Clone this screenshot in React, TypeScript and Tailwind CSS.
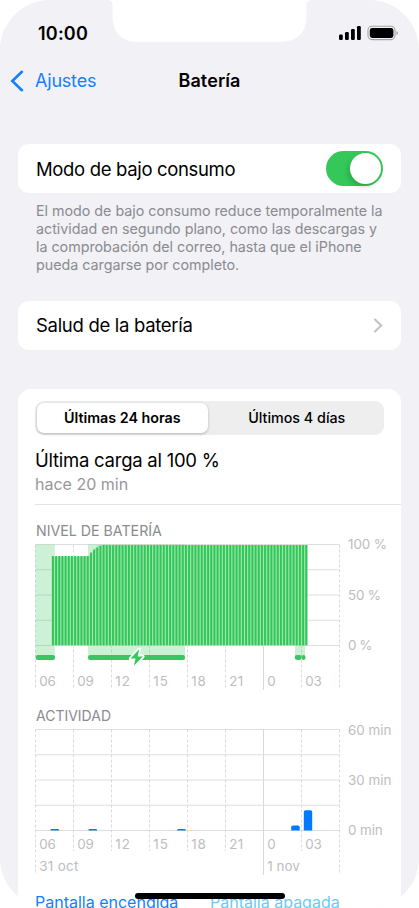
import React from "react";

const HOURS = ["06", "09", "12", "15", "18", "21", "0", "03"];
const LEFT = 35.5;
const STEP = 38;
const SLOT = STEP / 12;
const RAMP = [552.6, 549.4, 547.6, 546];

const levelBars = Array.from({ length: 81 }, (_, n) => {
  const top = n < 12 ? 556 : n < 16 ? RAMP[n - 12] : 545;
  return { x: LEFT + (n + 5) * SLOT + 0.6, top };
});

function Label({ x, y, w, children }: { x: number; y: number; w: number; children: string }) {
  return (
    <text x={x} y={y} textLength={w} lengthAdjust="spacing" fontSize="13.4" fill="#bdbdc0">
      {children}
    </text>
  );
}

function Grid({ top, bottom, tail, ends }: { top: number; bottom: number; tail: number; ends: number }) {
  return (
    <g strokeWidth="1">
      {[0, 1, 2, 3, 4].map((i) => {
        const y = top + ((bottom - top) * i) / 4;
        return <line key={i} x1={LEFT} x2={LEFT + 304} y1={y} y2={y} stroke="#dededf" />;
      })}
      {Array.from({ length: 9 }, (_, i) => (
        <line
          key={i}
          x1={LEFT + i * STEP}
          x2={LEFT + i * STEP}
          y1={top}
          y2={i === 6 ? ends + 2 : i === 0 || i === 8 ? ends : tail}
          stroke={i === 6 ? "#d9d9db" : "#dadadc"}
          strokeDasharray={i === 6 ? undefined : "3 2"}
        />
      ))}
    </g>
  );
}

function HourLabels({ y }: { y: number }) {
  return (
    <>
      {HOURS.map((h, i) => (
        <Label key={h} x={LEFT + i * STEP + 3.8} y={y} w={h === "0" ? 8 : h[0] === "1" ? 14.6 : h === "21" ? 14 : 16.5}>
          {h}
        </Label>
      ))}
    </>
  );
}

function LevelChart() {
  return (
    <svg className="block h-[162px] w-[383px] overflow-visible" viewBox="18 538 383 162" fontFamily='Inter, "Liberation Sans", sans-serif'>
      <Grid top={544.5} bottom={645.5} tail={688} ends={688} />
      <g fill="#34c759" fillOpacity="0.25">
        <rect x="35.5" y="544.5" width="19.3" height="111" />
        <rect x="88" y="544.5" width="97" height="111" />
        <rect x="295" y="645" width="10" height="11" />
      </g>
      <path d="M51.8 645.3V556.5H88.5L98 545H307.6V645.3Z" fill="#98ebac" />
      {levelBars.map((b) => (
        <rect key={b.x} x={b.x} y={b.top} width="2" height={645.3 - b.top} rx="0.4" fill="#36c45a" />
      ))}
      <g fill="#3cc463">
        <rect x="35.7" y="655" width="19.3" height="5" rx="2" />
        <rect x="88" y="655" width="97" height="5" rx="2" />
        <rect x="294.7" y="655" width="7" height="5" rx="2.4" />
        <rect x="301.7" y="655" width="3.7" height="5" rx="1.8" />
      </g>
      <path
        d="M139.2 649.3L130.6 658.6H135.5L133.9 665.8L142.8 656.4H137.7Z"
        fill="#34c759"
        stroke="#fff"
        strokeWidth="3.6"
        strokeLinejoin="round"
        paintOrder="stroke"
      />
      <HourLabels y={686} />
      <Label x={348} y={549.3} w={39}>100 %</Label>
      <Label x={348} y={599.5} w={33}>50 %</Label>
      <Label x={348} y={650} w={24.5}>0 %</Label>
    </svg>
  );
}

function ActivityChart() {
  return (
    <svg className="block h-[156px] w-[383px] overflow-visible" viewBox="18 722 383 156" fontFamily='Inter, "Liberation Sans", sans-serif'>
      <Grid top={729.5} bottom={830.5} tail={851} ends={873} />
      <g fill="#007aff">
        <path d="M50.5 830.5V829.7Q50.5 829 51.5 829H58Q59 829 59 829.7V830.5Z" />
        <path d="M88.5 830.5V829.7Q88.5 829 89.5 829H96Q97 829 97 829.7V830.5Z" />
        <path d="M177.2 830.5V829.7Q177.2 829 178.2 829H184.7Q185.7 829 185.7 829.7V830.5Z" />
        <path d="M291.2 830.5V827.3Q291.2 825.6 292.9 825.6H298Q299.7 825.6 299.7 827.3V830.5Z" />
        <path d="M303.8 830.5V812Q303.8 810.3 305.5 810.3H310.5Q312.2 810.3 312.2 812V830.5Z" />
      </g>
      <HourLabels y={849} />
      <Label x={39.3} y={871} w={39}>31 oct</Label>
      <Label x={267.3} y={871} w={32.5}>1 nov</Label>
      <Label x={348} y={734.5} w={43.5}>60 min</Label>
      <Label x={348} y={785} w={43.5}>30 min</Label>
      <Label x={348} y={835.3} w={34.7}>0 min</Label>
    </svg>
  );
}

export default function App() {
  return (
    <div className="h-[908px] w-[419px] overflow-hidden bg-white font-[Inter,'Liberation_Sans',sans-serif]">
      <main className="relative flex h-full w-full flex-col overflow-hidden rounded-[50px] bg-[#f1f1f6]">
        <svg className="absolute left-[107px] top-0 h-[42px] w-[206px]" viewBox="107 0 206 42" fill="#fff">
          <path d="M107 0C111 0 112.5 2.2 112.5 6V16C112.5 32 121 41.7 137 41.7H281C297.5 41.7 306.5 32 306.5 16V6C306.5 2.2 308 0 312 0Z" />
        </svg>
        <div className="flex h-[50px] shrink-0 items-start justify-between pl-[38px] pr-[21px] pt-[22px]">
          <span className="text-[18px] font-semibold leading-[24px] tracking-[0.2px]">10:00</span>
          <svg className="mt-[3px] h-[16px] w-[60px]" viewBox="338 25 60 16">
            <rect x="339" y="34.5" width="3.8" height="5.5" rx="1.2" />
            <rect x="345" y="32" width="3.8" height="8" rx="1.2" />
            <rect x="351" y="29" width="3.8" height="11" rx="1.2" />
            <rect x="357" y="26" width="3.8" height="14" rx="1.2" />
            <rect x="368" y="26.3" width="27" height="13.3" rx="4" fill="none" stroke="#a4a4a8" strokeWidth="1.1" />
            <rect x="369.8" y="28" width="23.6" height="10" rx="2.4" />
            <path d="M396.4 31V35.3Q398 34.7 398 33.1Q398 31.6 396.4 31Z" fill="#a4a4a8" />
          </svg>
        </div>
        <nav className="grid h-[62px] shrink-0 grid-cols-[1fr_auto_1fr] items-center px-[10px]">
          <a className="flex items-center gap-[11px] text-[18px] leading-[24px] tracking-[-0.2px] text-[#1480fb]">
            <svg className="h-[22px] w-[14px]" viewBox="0 0 14 22" fill="none">
              <path d="M11.9 1.8L2.3 11L11.9 20.2" stroke="#1480fb" strokeWidth="2.6" strokeLinecap="round" />
            </svg>
            Ajustes
          </a>
          <h1 className="text-[18px] font-semibold leading-[24px] tracking-[0.1px]">Batería</h1>
        </nav>
        <section className="mx-[18px] mt-[32px] flex h-[49px] shrink-0 items-center justify-between rounded-[11px] bg-white px-[18px]">
          <span className="pt-[2px] text-[18.5px] tracking-[-0.34px]">Modo de bajo consumo</span>
          <span className="flex h-[35px] w-[57px] items-center justify-end rounded-full bg-[#34c759] p-[2px]">
            <span className="h-[31px] w-[31px] rounded-full bg-white shadow-[-2px_3px_5px_rgba(0,0,0,0.15)]" />
          </span>
        </section>
        <p className="ml-[36px] mt-[9px] shrink-0 whitespace-nowrap text-[14.3px] leading-[18px] tracking-[-0.02px] text-[#8b8b90]">
          El modo de bajo consumo reduce temporalmente la<br />
          actividad en segundo plano, como las descargas y<br />
          la comprobación del correo, hasta que el iPhone<br />
          pueda cargarse por completo.
        </p>
        <section className="mx-[18px] mt-[26.5px] flex h-[49px] shrink-0 items-center justify-between rounded-[11px] bg-white px-[18px]">
          <span className="pt-[2px] text-[18.5px] tracking-[-0.3px]">Salud de la batería</span>
          <svg className="h-[15px] w-[10px]" viewBox="0 0 10 15" fill="none">
            <path d="M2 1.5L8.2 7.5L2 13.5" stroke="#c3c3c6" strokeWidth="2.1" strokeLinecap="round" />
          </svg>
        </section>
        <section className="mx-[18px] mt-[39.5px] flex h-[540px] shrink-0 flex-col rounded-t-[13px] bg-white pt-[12px]">
          <div className="mx-[17px] grid h-[34px] shrink-0 grid-cols-2 rounded-[9px] bg-[#eeeeef] text-[14.3px] leading-[34px]">
            <span className="m-[2px] rounded-[7px] bg-white text-center font-semibold leading-[30px] shadow-[0_1px_3px_rgba(0,0,0,0.25)]">Últimas 24 horas</span>
            <span className="text-center font-medium">Últimos 4 días</span>
          </div>
          <h2 className="ml-[17px] mt-[12px] text-[18.5px] leading-[26px] tracking-[-0.25px]">Última carga al 100 %</h2>
          <p className="ml-[17px] text-[16px] leading-[22px] text-[#97979b]">hace 20 min</p>
          <hr className="ml-[17px] mt-[9px] border-[#e3e3e4]" />
          <h3 className="ml-[18px] mt-[18px] text-[14.2px] leading-[15px] text-[#8b8b90]">NIVEL DE BATERÍA</h3>
          <LevelChart />
          <h3 className="ml-[18px] mt-[9px] text-[14px] leading-[13px] text-[#8b8b90]">ACTIVIDAD</h3>
          <ActivityChart />
          <div className="mt-[13px] flex whitespace-nowrap pl-[17px] text-[16px] leading-[22px]">
            <span className="w-[175px] text-[#147eff]">Pantalla encendida</span>
            <span className="text-[#6bc9f5]">Pantalla apagada</span>
          </div>
        </section>
        <div className="absolute left-[135px] top-[893px] h-[6px] w-[150px] rounded-full bg-black" />
      </main>
    </div>
  );
}
